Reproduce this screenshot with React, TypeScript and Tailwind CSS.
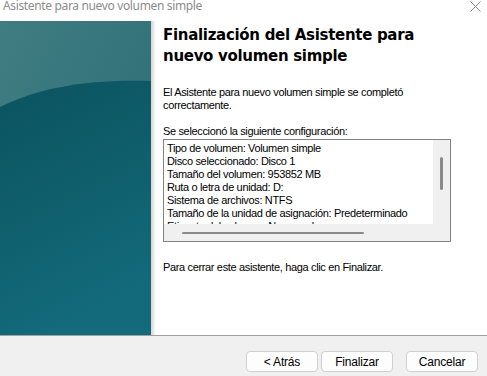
const CONFIG = [
  "Tipo de volumen: Volumen simple",
  "Disco seleccionado: Disco 1",
  "Tamaño del volumen: 953852 MB",
  "Ruta o letra de unidad: D:",
  "Sistema de archivos: NTFS",
  "Tamaño de la unidad de asignación: Predeterminado",
  "Etiqueta del volumen: Nuevo vol",
];

function SidePanel() {
  return (
    <svg width="151" height="314" viewBox="0 0 151 314" className="block">
      <defs>
        <linearGradient id="top" x1="0" y1="0" x2="1" y2="1">
          <stop offset="0" stopColor="#3f7d82" />
          <stop offset="1" stopColor="#2a6b73" />
        </linearGradient>
        <linearGradient id="body" x1="0" y1="0" x2="0.3" y2="1">
          <stop offset="0" stopColor="#0b5360" />
          <stop offset="0.5" stopColor="#0f5e6c" />
          <stop offset="1" stopColor="#136a7a" />
        </linearGradient>
      </defs>
      <rect width="151" height="314" fill="url(#top)" />
      <path d="M0 86 C 40 66, 90 58, 151 60 L151 314 L0 314 Z" fill="url(#body)" />
    </svg>
  );
}

function Button({ label }: { label: string }) {
  return (
    <button className="block w-[72px] h-[21px] rounded-[4px] border border-[#d0d0d0] bg-[#fdfdfd] text-[12px] leading-none text-black tracking-[-0.2px]">
      {label}
    </button>
  );
}

const body = "text-[11px] leading-[13px] text-black tracking-[-0.35px]";

export default function App() {
  return (
    <div className="w-[487px] h-[376px] bg-white flex flex-col overflow-hidden" style={{ fontFamily: '"Liberation Sans", Arial, sans-serif' }}>
      {/* Title bar */}
      <div className="h-[21px] flex items-start justify-between pl-[3px] pr-[6px]">
        <span className="text-[12px] leading-[12px] text-[#8c8c8c] tracking-[-0.35px]" style={{ fontFamily: '"Noto Sans", "Liberation Sans", sans-serif' }}>
          Asistente para nuevo volumen simple
        </span>
        <svg width="11" height="11" viewBox="0 0 11 11" className="mt-[1px]">
          <path d="M0.5 0.5 L10.5 10.5 M10.5 0.5 L0.5 10.5" stroke="#8c8c8c" strokeWidth="1" />
        </svg>
      </div>

      {/* Content */}
      <div className="h-[314px] flex">
        <SidePanel />
        <div className="w-[5px] bg-gradient-to-r from-[#d4d4d4] to-white" />
        <div className="flex-1 pl-[7px] pt-[4px]">
          <h1 className="text-[15px] leading-[21px] font-bold text-black tracking-[-0.3px]" style={{ fontFamily: '"DejaVu Sans", Verdana, sans-serif' }}>
            Finalización del Asistente para
            <br />
            nuevo volumen simple
          </h1>
          <p className={`mt-[19px] ${body}`}>
            El Asistente para nuevo volumen simple se completó
            <br />
            correctamente.
          </p>
          <p className={`mt-[13px] ${body}`}>Se seleccionó la siguiente configuración:</p>

          <div className="mt-[1px] w-[288px] h-[103px] border border-[#828282] grid grid-cols-[1fr_17px] grid-rows-[1fr_17px] bg-[#f0f0f0]">
            <div className="bg-white overflow-hidden pl-[3px] pt-[2px]">
              {CONFIG.map((line) => (
                <div key={line} className={`${body} whitespace-nowrap`}>
                  {line}
                </div>
              ))}
            </div>
            <div className="flex justify-center pt-[17px]">
              <div className="w-[3px] h-[33px] rounded-full bg-[#8a8a8a]" />
            </div>
            <div className="flex items-center pl-[18px]">
              <div className="w-[182px] h-[2px] rounded-full bg-[#8a8a8a]" />
            </div>
            <div />
          </div>

          <p className={`mt-[19px] ${body}`}>Para cerrar este asistente, haga clic en Finalizar.</p>
        </div>
      </div>

      {/* Footer */}
      <div className="flex-1 border-t border-[#a0a0a0] bg-[#f0f0f0] flex justify-end items-start pt-[15px] pr-[9px]">
        <div className="flex gap-[3px]">
          <Button label="< Atrás" />
          <Button label="Finalizar" />
        </div>
        <div className="ml-[13px]">
          <Button label="Cancelar" />
        </div>
      </div>
    </div>
  );
}
